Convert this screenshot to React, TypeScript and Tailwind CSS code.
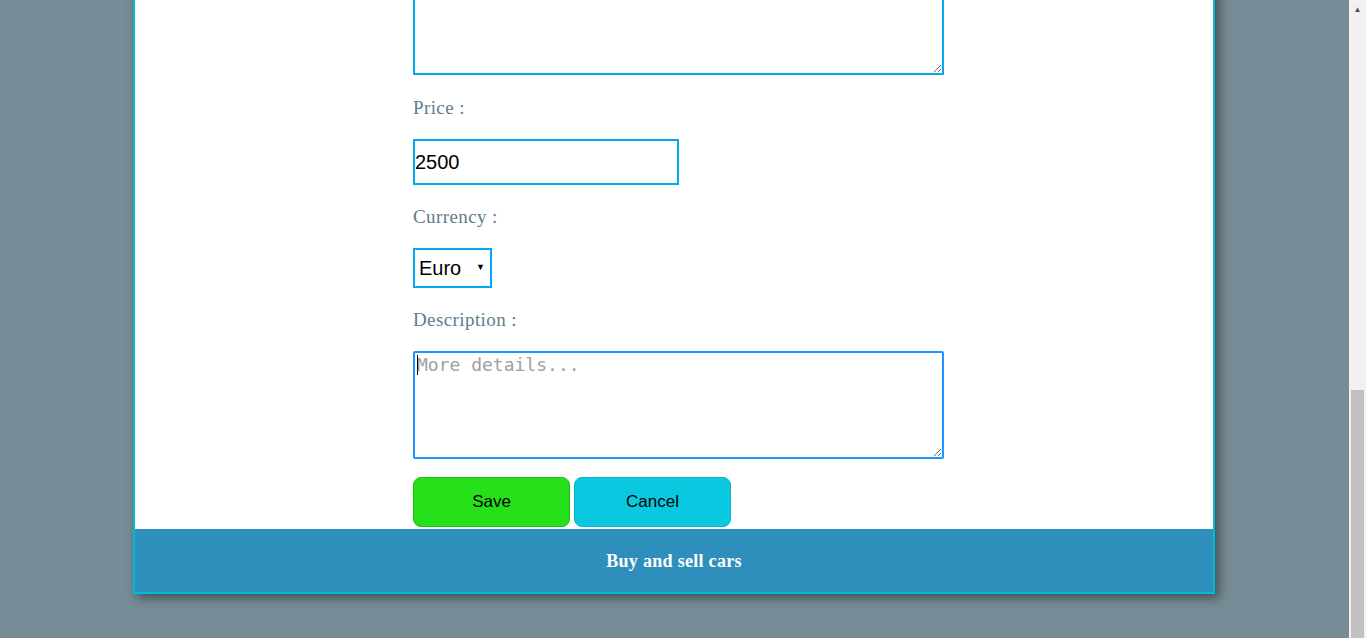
export default function App() {
  return (
    <div className="flex h-[638px] w-[1366px] overflow-hidden bg-[#778c96]">
      <main className="flex flex-1 flex-col justify-end pb-[44px] pl-[133px] pr-[134px]">
        <div className="flex flex-col border-2 border-[#00bcd4] bg-white shadow-[4px_4px_10px_rgba(0,0,0,0.45)]">
          <form className="flex flex-col pl-[278px] font-['Liberation_Serif',serif]">
            <textarea
              readOnly
              className="h-[108px] w-[531px] resize border-2 border-[#03a9f4] outline-none"
            />
            <label className="flex h-[64px] items-center pt-[2px] text-[19px] tracking-[0.4px] text-[#607d8b]">Price :</label>
            <input
              readOnly
              value="2500"
              className="h-[46px] w-[266px] border-2 border-[#03a9f4] px-0 font-['Liberation_Sans',sans-serif] text-[20px] text-black outline-none"
            />
            <label className="flex h-[63px] items-center pt-[2px] text-[19px] tracking-[0.4px] text-[#607d8b]">Currency :</label>
            <div className="flex h-[40px] w-[79px] items-center justify-between border-2 border-[#03a9f4] pl-[4px] pr-[5px] font-['Liberation_Sans',sans-serif] text-[20px] text-black">
              <span>Euro</span>
              <span className="text-[9px]">▼</span>
            </div>
            <label className="flex h-[63px] items-center pt-[2px] text-[19px] tracking-[0.4px] text-[#607d8b]">Description :</label>
            <div className="relative h-[108px] w-[531px]">
              <textarea
                readOnly
                placeholder="More details..."
                className="h-full w-full resize rounded-[2px] border-2 border-[#1e96ff] px-[2px] py-0 font-['DejaVu_Sans_Mono',monospace] text-[18px] leading-[24px] outline-none placeholder:text-[#a0a0a0]"
              />
              <span className="absolute left-[4px] top-[4px] h-[20px] w-px bg-black" />
            </div>
            <div className="mt-[18px] mb-[2px] flex gap-[4px] font-['Liberation_Sans',sans-serif] text-[17px] text-black">
              <button type="button" className="h-[50px] w-[157px] rounded-[8px] border border-[#22b81a] bg-[#26e01a]">
                Save
              </button>
              <button type="button" className="h-[50px] w-[157px] rounded-[8px] border border-[#08b4cc] bg-[#0ac8e0]">
                Cancel
              </button>
            </div>
          </form>
          <footer className="flex h-[63px] items-center justify-center pt-[2px] bg-[#2e8fbd] font-['Liberation_Serif',serif] text-[18px] font-bold tracking-[0.3px] text-white">
            Buy and sell cars
          </footer>
        </div>
      </main>
      <div className="flex w-[17px] flex-col items-center bg-[#f1f1f1]">
        <div className="flex h-[17px] items-center justify-center text-[8px] text-[#505050]">▲</div>
        <div className="flex-1" />
        <div className="h-[248px] w-[13px] bg-[#c1c1c1]" />
      </div>
    </div>
  );
}
